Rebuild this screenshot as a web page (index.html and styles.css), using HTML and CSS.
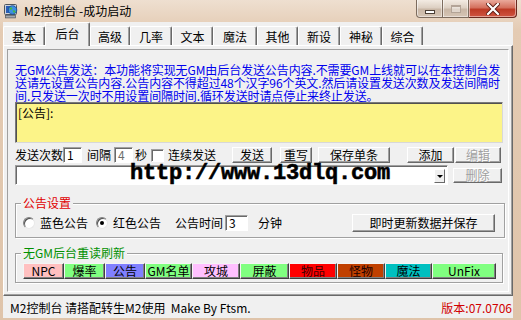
FILE: index.html
```html
<!DOCTYPE html>
<html>
<head>
<meta charset="utf-8">
<link rel="stylesheet" href="styles.css">
</head>
<body>
<div class="win">
  <div class="titlebar">
    <svg class="appicon" width="16" height="16" viewBox="0 0 16 16">
      <rect x="1.5" y="1.5" width="12" height="10" rx="1" fill="#cfd3d8" stroke="#4f565e"/>
      <rect x="3" y="3" width="9" height="7" fill="#2c5fb8"/>
      <circle cx="9.5" cy="7" r="4.3" fill="#3d8fe3" stroke="#174a92" stroke-width="0.8"/>
      <path d="M6.5 4.8 q2 -1.2 3 0.6 q-0.6 1.8 -2.6 1.4 z M9.6 7.6 q2 -0.8 3 0.8 q-0.8 1.8 -2.2 1.2 z" fill="#44b84c"/>
      <rect x="2.5" y="12.3" width="10" height="2.6" fill="#a3a9b0" stroke="#4f565e" stroke-width="0.7"/>
    </svg>
    <span class="title">M2控制台 -成功启动</span>
    <div class="capbtns">
      <span class="cb min"><i class="minbar"></i></span>
      <span class="cb max"><i class="maxbox"></i></span>
      <span class="cb close"><svg width="14" height="12" viewBox="0 0 14 12"><path d="M2 1 L12 11 M12 1 L2 11" stroke="#5a1a12" stroke-width="4" stroke-linecap="square"/><path d="M2 1 L12 11 M12 1 L2 11" stroke="#ffffff" stroke-width="2.2" stroke-linecap="square"/></svg></span>
    </div>
  </div>

  <div class="client">
    <div class="tabs">
      <span class="tab w42">基本</span>
      <span class="tab active w45">后台</span>
      <span class="tab w40">高级</span>
      <span class="tab w42">几率</span>
      <span class="tab w41">文本</span>
      <span class="tab w44">魔法</span>
      <span class="tab w41">其他</span>
      <span class="tab w42">新设</span>
      <span class="tab w42">神秘</span>
      <span class="tab w41">综合</span>
    </div>

    <div class="tabpanel">
      <div class="sheet">
        <div class="notice">无GM公告发送：本功能将实现无GM由后台发送公告内容.不需要GM上线就可以在本控制台发<br>送请先设置公告内容.公告内容不得超过48个汉字96个英文.然后请设置发送次数及发送间隔时<br>间.只发送一次时不用设置间隔时间.循环发送时请点停止来终止发送。</div>

        <div class="memo">[公告]:</div>

        <div class="row r1">
          <span class="lbl">发送次数</span><span class="edit e-cnt">1</span>
          <span class="lbl m-l2">间隔</span><span class="edit e-int grey">4</span>
          <span class="lbl m-l3">秒</span><span class="chk"></span>
          <span class="lbl m-l4">连续发送</span>
          <span class="btn b-send">发送</span>
          <span class="btn b-rw">重写</span>
          <span class="btn b-save">保存单条</span>
          <span class="btn b-add">添加</span>
          <span class="btn b-edit dis">编辑</span>
        </div>

        <div class="row r2">
          <span class="combo"><span class="ddbtn"><i class="arrow"></i></span></span>
          <span class="btn b-del dis">删除</span>
          <span class="watermark">http://www.13dlq.com</span>
        </div>

        <div class="grp g1">
          <span class="legend red">公告设置</span>
          <div class="grow">
            <span class="radio"></span><span class="lbl m-r">蓝色公告</span>
            <span class="radio on m-rad2"></span><span class="lbl m-r">红色公告</span>
            <span class="lbl m-time">公告时间</span><span class="edit e-time">3</span>
            <span class="lbl m-min">分钟</span>
            <span class="btn b-upd">即时更新数据并保存</span>
          </div>
        </div>

        <div class="grp g2">
          <span class="legend green">无GM后台重读刷新</span>
          <div class="brow">
            <span class="cbtn c-pink w41">NPC</span>
            <span class="cbtn c-green w41">爆率</span>
            <span class="cbtn c-blue w40">公告</span>
            <span class="cbtn c-green w47">GM名单</span>
            <span class="cbtn c-violet w48">攻城</span>
            <span class="cbtn c-green w49">屏蔽</span>
            <span class="cbtn c-red w48">物品</span>
            <span class="cbtn c-brown w48">怪物</span>
            <span class="cbtn c-teal w47">魔法</span>
            <span class="cbtn c-green w64">UnFix</span>
          </div>
        </div>
      </div>
    </div>

    <div class="status">
      <span class="st-left">M2控制台 请搭配转生M2使用&nbsp; Make By Ftsm.</span>
      <span class="st-right">版本:07.0706</span>
    </div>
  </div>
</div>
</body>
</html>
```

FILE: styles.css
```css
* { box-sizing: border-box; }
html, body { margin: 0; padding: 0; }
body {
  width: 521px;
  height: 320px;
  overflow: hidden;
  background: #e2c8af;
  font-family: "Noto Sans CJK SC", "Noto Sans", sans-serif;
  font-size: 12px;
  color: #000;
}
.win {
  width: 521px;
  height: 320px;
  display: flex;
  flex-direction: column;
  background: linear-gradient(#eedfd0, #e4cbb3 30px, #dfc4aa);
}

/* title bar */
.titlebar {
  height: 22px;
  flex: none;
  display: flex;
  align-items: center;
  padding-left: 3px;
}
.appicon { flex: none; }
.title { margin-left: 5px; line-height: 14px; }
.capbtns {
  margin-left: auto;
  margin-right: 4px;
  align-self: flex-start;
  display: flex;
  height: 18px;
}
.cb {
  height: 18px;
  border: 1px solid #7d6c5e;
  border-top: none;
  display: flex;
  align-items: center;
  justify-content: center;
  box-shadow: inset 1px 0 rgba(255,255,255,.55), inset -1px -1px rgba(255,255,255,.45);
}
.cb.min {
  width: 27px;
  border-radius: 0 0 0 4px;
  background: linear-gradient(#f3ebe3, #ddd0c3 45%, #c9b7a6 55%, #d6c5b5);
}
.cb.max {
  width: 26px;
  border-left: none;
  background: linear-gradient(#f3ebe3, #ddd0c3 45%, #c9b7a6 55%, #d6c5b5);
}
.cb.close {
  width: 48px;
  border-left: none;
  border-color: #6a2a20;
  border-radius: 0 0 4px 0;
  background: linear-gradient(#eaa99b, #d4705d 45%, #bd3a25 55%, #cf5642);
}
.minbar {
  display: block;
  width: 10px;
  height: 4px;
  margin-top: 6px;
  background: #fff;
  border: 1px solid #4b3f36;
}
.maxbox {
  display: block;
  width: 10px;
  height: 8px;
  border: 1px solid #b3a497;
  border-top-width: 2px;
  background: rgba(255,255,255,.4);
}

/* client */
.client {
  flex: 1;
  margin: 0 8px 2px 3px;
  background: #f0f0f0;
  display: flex;
  flex-direction: column;
}
.tabs {
  height: 23px;
  flex: none;
  display: flex;
  align-items: flex-end;
}
.tab {
  height: 19px;
  padding-top: 2px;
  text-align: center;
  line-height: 15px;
  border-top: 1px solid #fff;
  border-left: 1px solid #fff;
  border-right: 1px solid #696969;
  box-shadow: inset -1px 0 #a0a0a0;
  border-radius: 2px 2px 0 0;
  background: #f0f0f0;
}
.tab.active {
  height: 24px;
  margin-bottom: -1px;
  padding-top: 3px;
  position: relative;
  z-index: 1;
}
.w40 { width: 40px; }
.w41 { width: 41px; }
.w42 { width: 42px; }
.w44 { width: 44px; }
.w45 { width: 45px; }
.w47 { width: 47px; }
.w48 { width: 48px; }
.w49 { width: 49px; }
.w64 { width: 64px; }

.tabpanel {
  height: 251px;
  flex: none;
  border: 1px solid;
  border-color: #fff #696969 #696969 #fff;
  box-shadow: inset -1px -1px #a0a0a0;
  padding: 3px;
}
.sheet {
  height: 100%;
  border: 1px solid;
  border-color: #a0a0a0 #fff #fff #a0a0a0;
  padding: 13px 3px 0 7px;
  display: flex;
  flex-direction: column;
  align-items: flex-start;
}
.notice {
  color: #0000ee;
  line-height: 13px;
  height: 39px;
  white-space: nowrap;
  letter-spacing: -0.1px;
}
.memo {
  width: 488px;
  height: 41px;
  flex: none;
  background: #fcf488;
  border: 1px solid;
  border-color: #7a7a7a #d8d8d8 #d8d8d8 #7a7a7a;
  box-shadow: inset 1px 1px #505050;
  padding: 3px 2px;
  line-height: 13px;
}

.row {
  display: flex;
  align-items: center;
  flex: none;
}
.r1 { margin-top: 4px; height: 16px; }
.r2 { margin-top: 2px; height: 20px; position: relative; }
.lbl { line-height: 14px; white-space: nowrap; }
.m-l2 { margin-left: 5px; }
.m-l3 { margin-left: 2px; }
.m-l4 { margin-left: 4px; }

.edit {
  height: 16px;
  background: #fff;
  border: 1px solid;
  border-color: #a0a0a0 #fff #fff #a0a0a0;
  box-shadow: inset 1px 1px #696969;
  padding: 0 0 0 3px;
  line-height: 14px;
}
.edit.grey { color: #6d6d6d; }
.e-cnt { width: 19px; }
.e-int { width: 19px; margin-left: 3px; }
.chk {
  width: 13px;
  height: 13px;
  margin-left: 4px;
  background: #fff;
  border: 1px solid;
  border-color: #a0a0a0 #fff #fff #a0a0a0;
  box-shadow: inset 1px 1px #696969;
}

.btn {
  height: 16px;
  background: #f0f0f0;
  border: 1px solid;
  border-color: #fff #696969 #696969 #fff;
  box-shadow: inset -1px -1px #a0a0a0;
  display: inline-flex;
  align-items: center;
  justify-content: center;
  line-height: 14px;
  white-space: nowrap;
}
.btn.dis { color: #a0a0a0; text-shadow: 1px 1px #fff; }
.b-send { width: 40px; margin-left: 16px; }
.b-rw { width: 32px; margin-left: 8px; }
.b-save { width: 72px; margin-left: 6px; }
.b-add { width: 47px; margin-left: 17px; }
.b-edit { width: 46px; margin-left: 1px; }

.combo {
  width: 433px;
  height: 20px;
  background: #fff;
  border: 1px solid;
  border-color: #a0a0a0 #fff #fff #a0a0a0;
  box-shadow: inset 1px 1px #696969;
  display: flex;
  align-items: center;
  justify-content: flex-end;
  padding-right: 2px;
}
.ddbtn {
  width: 11px;
  height: 14px;
  margin-top: 2px;
  background: #f0f0f0;
  border: 1px solid;
  border-color: #fff #696969 #696969 #fff;
  display: flex;
  align-items: center;
  justify-content: center;
}
.arrow {
  display: block;
  width: 0;
  height: 0;
  border-left: 3px solid transparent;
  border-right: 3px solid transparent;
  border-top: 3px solid #000;
}
.b-del { width: 49px; height: 15px; margin-left: 5px; }

.watermark {
  position: absolute;
  left: 115px;
  top: -2px;
  font-family: "Liberation Mono", monospace;
  font-weight: bold;
  font-size: 22px;
  line-height: 22px;
  letter-spacing: -0.2px;
  -webkit-text-stroke: 0.6px #000;
  color: #000;
  white-space: nowrap;
}

/* group boxes */
.grp {
  border: 1px solid #a0a0a0;
  box-shadow: inset 1px 1px #fff, 1px 1px #fff;
  flex: none;
}
.g1 { width: 490px; margin-top: 18px; padding: 0 0 5px 7px; }
.g2 { width: 488px; margin-top: 15px; padding: 0 0 3px 7px; }
.legend {
  display: block;
  width: max-content;
  margin: -8px 0 0 -2px;
  padding: 0 2px;
  background: #f0f0f0;
  line-height: 14px;
}
.legend.red { color: #e00000; }
.legend.green { color: #009000; }

.grow {
  margin-top: 4px;
  height: 18px;
  display: flex;
  align-items: center;
}
.radio {
  width: 12px;
  height: 12px;
  border-radius: 50%;
  background: #fff;
  border: 1px solid;
  border-color: #808080 #e8e8e8 #e8e8e8 #808080;
  box-shadow: inset 1px 1px #505050;
  display: flex;
  align-items: center;
  justify-content: center;
}
.radio.on::after {
  content: "";
  width: 4px;
  height: 4px;
  border-radius: 50%;
  background: #000;
}
.m-r { margin-left: 5px; }
.m-rad2 { margin-left: 8px; }
.m-time { margin-left: 14px; }
.e-time { width: 23px; margin-left: 2px; }
.m-min { margin-left: 10px; }
.b-upd { width: 143px; height: 18px; margin-left: 70px; }

.brow {
  margin-top: 3px;
  height: 16px;
  display: flex;
}
.cbtn {
  height: 16px;
  display: flex;
  align-items: center;
  justify-content: center;
  line-height: 14px;
  border: 1px solid;
  border-color: #f4f4f4 #404040 #404040 #f4f4f4;
  box-shadow: inset -1px -1px #808080;
}
.c-pink { background: #ffc0c0; }
.c-green { background: #80ff80; }
.c-blue { background: #8080ff; }
.c-violet { background: #ffc0ff; }
.c-red { background: #ff0000; color: #400000; }
.c-brown { background: #c04000; color: #200000; }
.c-teal { background: #00c0c0; }

/* status bar */
.status {
  flex: 1;
  display: flex;
  justify-content: space-between;
  align-items: center;
  padding: 2px 1px 0 7px;
  line-height: 14px;
  white-space: nowrap;
}
.st-right { color: #d00000; }
```
